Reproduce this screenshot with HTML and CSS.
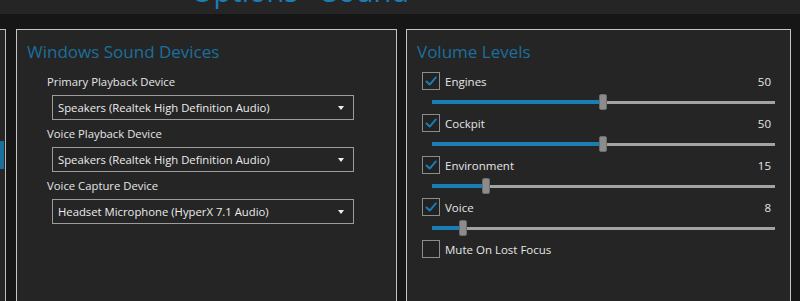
FILE: index.html
```html
<!DOCTYPE html>
<html>
<head>
<meta charset="utf-8">
<link rel="stylesheet" href="styles.css">
</head>
<body>
<div class="header"><div class="page-title">Options - Sound</div></div>
<div class="main">
  <div class="stub"><div class="stub-accent"></div></div>
  <section class="panel devices">
    <h2 class="panel-title">Windows Sound Devices</h2>
    <div class="field">
      <div class="field-label">Primary Playback Device</div>
      <div class="select"><span>Speakers (Realtek High Definition Audio)</span><i class="arrow"></i></div>
    </div>
    <div class="field">
      <div class="field-label">Voice Playback Device</div>
      <div class="select"><span>Speakers (Realtek High Definition Audio)</span><i class="arrow"></i></div>
    </div>
    <div class="field">
      <div class="field-label">Voice Capture Device</div>
      <div class="select"><span>Headset Microphone (HyperX 7.1 Audio)</span><i class="arrow"></i></div>
    </div>
  </section>
  <section class="panel volumes">
    <h2 class="panel-title">Volume Levels</h2>
    <div class="vol">
      <div class="check-row"><span class="box"><svg viewBox="0 0 18 18"><path d="M4 9.5 L7.5 13 L14.5 5"/></svg></span><span class="lbl">Engines</span><span class="val">50</span></div>
      <div class="slider"><div class="fill" style="width:167px"></div><div class="thumb"></div><div class="rest"></div></div>
    </div>
    <div class="vol">
      <div class="check-row"><span class="box"><svg viewBox="0 0 18 18"><path d="M4 9.5 L7.5 13 L14.5 5"/></svg></span><span class="lbl">Cockpit</span><span class="val">50</span></div>
      <div class="slider"><div class="fill" style="width:167px"></div><div class="thumb"></div><div class="rest"></div></div>
    </div>
    <div class="vol">
      <div class="check-row"><span class="box"><svg viewBox="0 0 18 18"><path d="M4 9.5 L7.5 13 L14.5 5"/></svg></span><span class="lbl">Environment</span><span class="val">15</span></div>
      <div class="slider"><div class="fill" style="width:50px"></div><div class="thumb"></div><div class="rest"></div></div>
    </div>
    <div class="vol">
      <div class="check-row"><span class="box"><svg viewBox="0 0 18 18"><path d="M4 9.5 L7.5 13 L14.5 5"/></svg></span><span class="lbl">Voice</span><span class="val">8</span></div>
      <div class="slider"><div class="fill" style="width:27px"></div><div class="thumb"></div><div class="rest"></div></div>
    </div>
    <div class="check-row"><span class="box"></span><span class="lbl">Mute On Lost Focus</span></div>
  </section>
</div>
</body>
</html>
```
FILE: styles.css
```css
* { box-sizing: border-box; }
html, body { margin: 0; padding: 0; }
body {
  background: #161616;
  width: 800px;
  height: 301px;
  overflow: hidden;
  font-family: "Open Sans", "Noto Sans", sans-serif;
  color: #e4e4e4;
}
.header {
  height: 14px;
  background: #252525;
  overflow: hidden;
  padding-left: 191px;
}
.page-title {
  font-size: 29px;
  line-height: 29px;
  color: #1b7db5;
  margin-top: -24px;
  white-space: nowrap;
}
.main {
  display: flex;
  margin-top: 15px;
  height: 290px;
}
.stub {
  width: 6px;
  border: 1px solid #bdbdbd;
  border-left: none;
  background: #252525;
  margin-right: 10px;
  height: 300px;
  padding-top: 111px;
}
.stub-accent {
  width: 4px;
  height: 28px;
  background: #1b6f9c;
}
.panel {
  background: #252525;
  border: 1px solid #c4c4c4;
  height: 300px;
}
.devices { width: 381px; margin-right: 9px; padding: 10px 0 0 10px; }
.volumes { width: 385px; padding: 10px 0 0 10px; }
.panel-title {
  margin: 0;
  font-weight: normal;
  font-size: 17px;
  line-height: 24px;
  color: #1c6f9c;
}
.devices .panel-title { margin-bottom: 10px; }
.field { padding-left: 20px; height: 52px; }
.field-label { font-size: 11.3px; line-height: 16px; height: 21px; color: #e6e6e6; }
.select {
  margin-left: 5px;
  width: 302px;
  height: 25px;
  border: 1px solid #9c9c9c;
  display: flex;
  align-items: center;
  justify-content: space-between;
  padding: 0 7px 0 5px;
  font-size: 11.3px;
  color: #ececec;
}
.arrow {
  width: 0; height: 0;
  border-left: 3.5px solid transparent;
  border-right: 3.5px solid transparent;
  border-top: 4px solid #f0f0f0;
  margin-right: 2px;
}
.volumes .panel-title { margin-bottom: 8px; }
.vol { height: 42px; }
.check-row {
  display: flex;
  align-items: center;
  height: 18px;
  padding-left: 5px;
  width: 354px;
  font-size: 11.5px;
}
.box {
  width: 18px; height: 18px;
  border: 1px solid #8c8c8c;
  background: #222222;
  margin-right: 5px;
  flex: none;
}
.box svg { display: block; width: 16px; height: 16px; }
.box path { fill: none; stroke: #1b7db5; stroke-width: 2.2; stroke-linecap: round; stroke-linejoin: round; }
.lbl { flex: 1; color: #e6e6e6; }
.val { color: #e6e6e6; }
.slider {
  display: flex;
  align-items: center;
  margin-left: 15px;
  width: 343px;
  height: 24px;
}
.fill { height: 4px; background: #1b7db5; }
.thumb {
  width: 8px; height: 16px;
  background: #8c8c8c;
  border: 1px solid #6c6c6c;
  border-radius: 2px;
  flex: none;
}
.rest { flex: 1; height: 3px; background: #a3a3a3; }
```
